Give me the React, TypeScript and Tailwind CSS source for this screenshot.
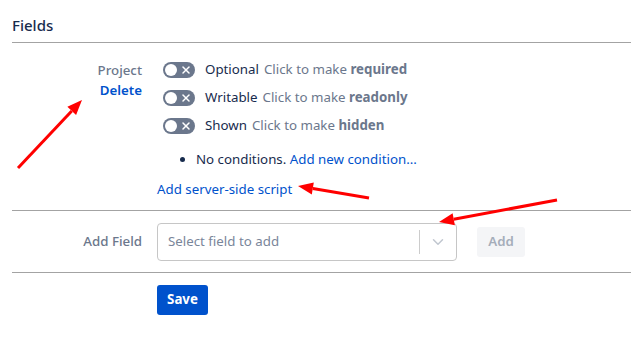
import { X, ChevronDown } from "lucide-react";

const toggles = [
  { name: "Optional", action: "required" },
  { name: "Writable", action: "readonly" },
  { name: "Shown", action: "hidden" },
];

function Toggle() {
  return (
    <span className="relative inline-flex h-4 w-8 shrink-0 items-center rounded-full bg-[#6b778c]">
      <span className="absolute left-[2px] h-3 w-3 rounded-full bg-white" />
      <X className="absolute right-[3px] h-3 w-3 text-white" strokeWidth={3} />
    </span>
  );
}

function Arrows() {
  const arrows = [
    { x1: 18, y1: 168, x2: 82, y2: 100 },
    { x1: 369, y1: 198, x2: 298, y2: 186 },
    { x1: 557, y1: 200, x2: 439, y2: 222 },
  ];
  return (
    <svg className="pointer-events-none absolute left-0 top-0" width="631" height="340">
      {arrows.map((a, i) => {
        const ang = Math.atan2(a.y2 - a.y1, a.x2 - a.x1);
        const len = 15;
        const w = 6;
        const bx = a.x2 - len * Math.cos(ang);
        const by = a.y2 - len * Math.sin(ang);
        const px = -Math.sin(ang) * w;
        const py = Math.cos(ang) * w;
        return (
          <g key={i}>
            <line x1={a.x1} y1={a.y1} x2={bx} y2={by} stroke="#ff0000" strokeWidth={3} />
            <polygon
              points={`${a.x2},${a.y2} ${bx + px},${by + py} ${bx - px},${by - py}`}
              fill="#ff0000"
            />
          </g>
        );
      })}
    </svg>
  );
}

export default function App() {
  return (
    <div
      className="relative h-[340px] w-[631px] overflow-hidden bg-white pl-3 text-[13.3px] text-[#172b4d]"
      style={{ fontFamily: '"Noto Sans", "Open Sans", sans-serif' }}
    >
      <h2 className="pb-[6px] pt-[14px] text-[15px] font-medium leading-[22px] text-[#172b4d]">
        Fields
      </h2>
      <div className="h-px bg-[#a3a3a3]" />

      <div className="grid grid-cols-[130px_1fr] gap-x-[15px] pb-[10px] pt-[13px]">
        <div className="flex flex-col items-end pt-[4px] leading-[20px]">
          <span className="font-medium text-[#6b778c]">Project</span>
          <a className="font-semibold text-[#0052cc]">Delete</a>
        </div>
        <div className="flex flex-col">
          {toggles.map((t) => (
            <div key={t.name} className="flex h-[28px] items-center pl-[6px]">
              <Toggle />
              <span className="ml-[10px]">{t.name}</span>
              <span className="ml-[5px] text-[#6b778c]">
                Click to make <b className="font-bold">{t.action}</b>
              </span>
            </div>
          ))}
          <ul className="mt-[8px] list-disc pl-[39px] leading-[22px]">
            <li>
              No conditions. <a className="text-[#0052cc]">Add new condition...</a>
            </li>
          </ul>
          <a className="mt-[8px] leading-[22px] text-[#0052cc]">Add server-side script</a>
        </div>
      </div>
      <div className="h-px bg-[#a3a3a3]" />

      <div className="grid grid-cols-[130px_1fr] gap-x-[15px] pb-[11px] pt-[12px]">
        <div className="flex h-[38px] items-center justify-end font-medium text-[#6b778c]">
          Add Field
        </div>
        <div className="flex items-center">
          <div className="flex h-[38px] w-[300px] items-center rounded-[4px] border border-[#c6c6c6] bg-white">
            <span className="flex-1 pl-[10px] text-[#7a869a]">Select field to add</span>
            <span className="h-[24px] w-px bg-[#cccccc]" />
            <span className="flex w-[36px] items-center justify-center">
              <ChevronDown className="h-[18px] w-[18px] text-[#c1c7d0]" strokeWidth={2} />
            </span>
          </div>
          <button className="ml-[20px] h-[30px] w-[48px] rounded-[3px] bg-[#f4f5f7] font-semibold text-[#a5adba]">
            Add
          </button>
        </div>
      </div>
      <div className="h-px bg-[#a3a3a3]" />

      <div className="grid grid-cols-[130px_1fr] gap-x-[15px] pt-[12px]">
        <div />
        <div>
          <button className="h-[30px] w-[51px] rounded-[3px] bg-[#0052cc] font-bold text-white">
            Save
          </button>
        </div>
      </div>

      <Arrows />
    </div>
  );
}
